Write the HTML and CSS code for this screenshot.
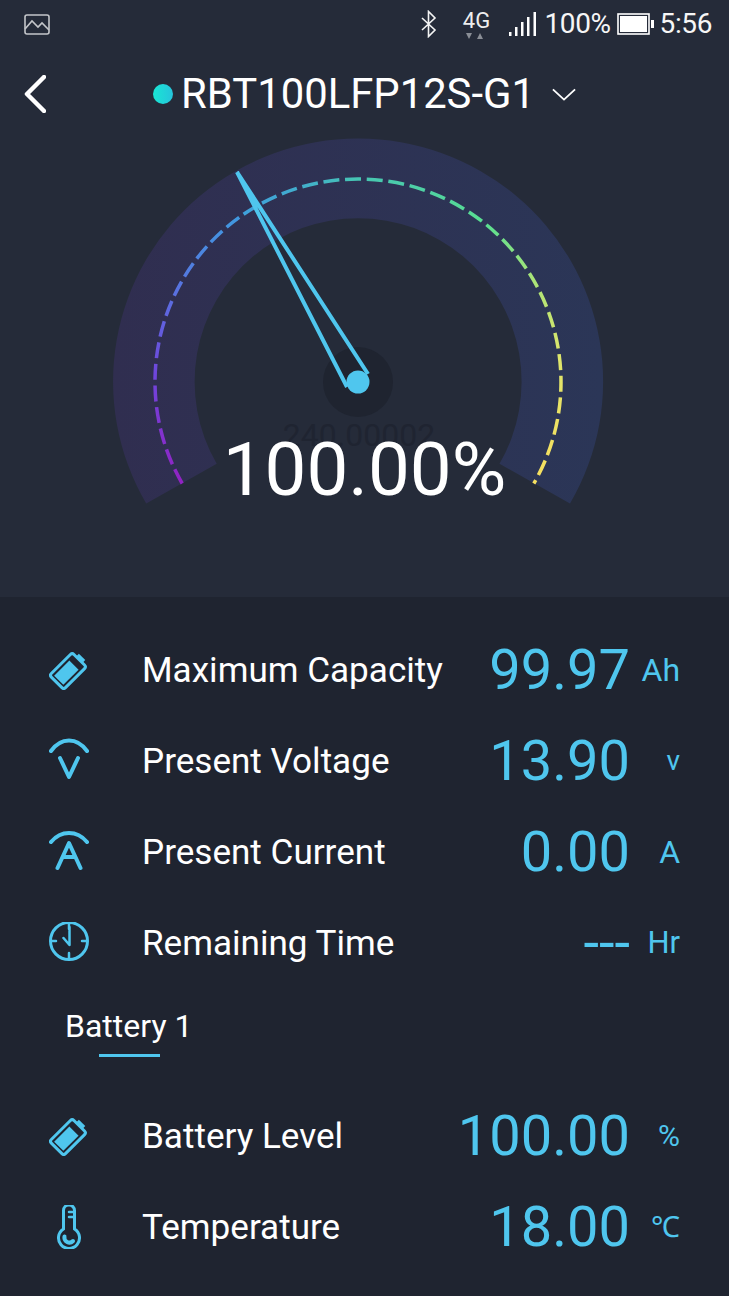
FILE: index.html
```html
<!DOCTYPE html>
<html lang="en">
<head>
<meta charset="utf-8">
<title>RBT100LFP12S-G1</title>
<link rel="stylesheet" href="styles.css">
</head>
<body>
<svg class="defs" width="0" height="0" aria-hidden="true">
  <defs>
    <symbol id="battery" viewBox="0 0 40 40">
      <g transform="rotate(45 20 20)">
        <rect class="ln" x="10" y="5.500" width="20" height="32" rx="2.500"/>
        <path class="sf" d="M15.500 1.500h9v4h-9z"/>
        <rect class="fl" x="13.500" y="13" width="13" height="21.500"/>
      </g>
    </symbol>
  </defs>
</svg>
<main class="phone">
  <section class="top">
    <div class="status">
      <svg class="st-img" width="26" height="21" viewBox="0 0 26 21"><rect x="1" y="1" width="24" height="19" rx="2"/><path d="M1 15 8 7l6 6 4-4 7 7"/></svg>
      <div class="st-right">
        <svg class="st-bt" width="22" height="28" viewBox="0 0 22 28"><path d="M4 8l13 12-6.500 6.500V1.500L17 8 4 20"/></svg>
        <div class="st-net"><span class="st-4g">4G</span><svg width="20" height="7" viewBox="0 0 20 7"><path d="M3 6 0 0h6zM11 6l3-6 3 6z"/></svg></div>
        <svg class="st-sig" width="30" height="26" viewBox="0 0 30 26"><path d="M1 21v4h2.500v-4zM7 16v9h2.500v-9zM13 11v14h2.500V11zM19 6v19h2.500V6zM25.500 1v24H28V1z"/></svg>
        <span class="st-txt st-pct">100%</span>
        <svg class="st-bat" width="37" height="22" viewBox="0 0 37 22"><rect class="bo" x="1" y="1" width="31" height="20"/><rect class="bi" x="3" y="3" width="27" height="16"/><rect class="bi" x="34" y="7" width="3" height="8"/></svg>
        <span class="st-txt">5:56</span>
      </div>
    </div>
    <header class="head">
      <svg class="back" width="22" height="38" viewBox="0 0 22 38"><path d="M20 2 3 19l17 17"/></svg>
      <div class="dev">
        <span class="dot"></span>
        <span class="name">RBT100LFP12S-G1</span>
        <svg class="caret" width="26" height="14" viewBox="0 0 26 14"><path d="M1 1.500 13 12.500 25 1.500"/></svg>
      </div>
    </header>
    <div class="gauge">
      <svg class="dial" width="729" height="400" viewBox="0 130 729 400">
        <defs>
          <linearGradient id="band" gradientUnits="userSpaceOnUse" x1="114" y1="0" x2="602" y2="0">
            <stop offset="0" stop-color="#302e50"/>
            <stop offset="1" stop-color="#2b3657"/>
          </linearGradient>
          <linearGradient id="dashL" gradientUnits="userSpaceOnUse" x1="0" y1="484" x2="0" y2="214">
            <stop offset="0" stop-color="#9222c2"/>
            <stop offset=".4" stop-color="#6f45dc"/>
            <stop offset=".7" stop-color="#5a6fe0"/>
            <stop offset="1" stop-color="#3f9be0"/>
          </linearGradient>
          <linearGradient id="dashR" gradientUnits="userSpaceOnUse" x1="243" y1="180" x2="560" y2="484">
            <stop offset=".05" stop-color="#3f9fdc"/>
            <stop offset=".19" stop-color="#46c6b2"/>
            <stop offset=".47" stop-color="#5adf90"/>
            <stop offset=".63" stop-color="#a8e478"/>
            <stop offset=".8" stop-color="#dde66c"/>
            <stop offset=".95" stop-color="#f5e060"/>
          </linearGradient>
        </defs>
        <path class="band" d="M146.200 503.500A245 243 0 1 1 570 503.500L499.500 463.800A163.500 163.500 0 1 0 216.700 463.800Z"/>
        <path class="dash dash-l" d="M182.200 483.500A203 203 0 0 1 243.600 214.300"/>
        <path class="dash dash-r" d="M243.600 214.300A203 203 0 0 1 533.800 483.500"/>
        <circle class="hub" cx="358" cy="382" r="35"/>
        <path class="needle" d="M347 387 237 172 368 374"/>
        <circle class="knob" cx="358" cy="382" r="11.500"/>
      </svg>
      <div class="ghost">240.00002</div>
      <div class="pct">100.00%</div>
    </div>
  </section>
  <section class="bottom">
    <div class="row">
      <svg class="ic" width="40" height="40"><use href="#battery"/></svg>
      <span class="label">Maximum Capacity</span><span class="val">99.97</span><span class="unit">Ah</span>
    </div>
    <div class="row">
      <svg class="ic" width="40" height="46" viewBox="0 0 40 46"><path class="ln" d="M2 13C12 -1 28 -1 38 13M11 20 20 39l9-19"/></svg>
      <span class="label">Present Voltage</span><span class="val">13.90</span><span class="unit unit-s">v</span>
    </div>
    <div class="row">
      <svg class="ic" width="40" height="46" viewBox="0 0 40 46"><path class="ln" d="M2 13C12 1 28 1 38 13M8.500 39 20 14l11.500 25M14 28h12"/></svg>
      <span class="label">Present Current</span><span class="val">0.00</span><span class="unit">A</span>
    </div>
    <div class="row">
      <svg class="ic" width="40" height="42" viewBox="0 0 40 42"><circle class="cl" cx="20" cy="19" r="18.500"/><path class="ln thin" d="M20 1v6M20 31v6M2 19h5M33 19h5M20.500 5v18l-6-7"/></svg>
      <span class="label">Remaining Time</span><span class="val">---</span><span class="unit unit-h">Hr</span>
    </div>
    <div class="tabs"><span class="tab">Battery 1</span></div>
    <div class="row">
      <svg class="ic" width="40" height="40"><use href="#battery"/></svg>
      <span class="label">Battery Level</span><span class="val">100.00</span><span class="unit unit-p">%</span>
    </div>
    <div class="row">
      <svg class="ic" width="40" height="44" viewBox="0 0 40 44"><path class="cl" d="M14.500 24V5.500a5.500 5.500 0 0 1 11 0V24a10.500 10.500 0 1 1-11 0Z"/><path class="ln thin" d="M20 7h4M20 12h4"/><path class="ln" d="M15.500 31.500a5 5 0 0 0 8.500 4.500"/></svg>
      <span class="label">Temperature</span><span class="val">18.00</span><span class="unit unit-c">℃</span>
    </div>
  </section>
</main>
</body>
</html>
```
FILE: styles.css
```css
* { box-sizing: border-box; margin: 0; padding: 0; }
html, body { width: 729px; height: 1296px; overflow: hidden; background: #1f2430; }
body { font-family: Roboto, "Liberation Sans", sans-serif; color: #fff; }
.defs { position: absolute; }
.phone { display: flex; flex-direction: column; width: 729px; height: 1296px; }

.top { height: 597px; background: #252b39; display: flex; flex-direction: column; }

.status { height: 48px; display: flex; align-items: center; justify-content: space-between; padding: 0 17px 0 24px; }
.st-right { display: flex; align-items: center; }
.st-img rect, .st-img path { fill: none; stroke: #c4c6ca; stroke-width: 1.6; }
.st-bt { margin-right: 21px; }
.st-bt path { fill: none; stroke: #f4f4f4; stroke-width: 1.6; }
.st-net { display: flex; flex-direction: column; align-items: center; width: 30px; margin-right: 17px; height: 31px; }
.st-4g { font-size: 22px; line-height: 23px; color: #eee; }
.st-net svg { fill: #8a8e96; margin-top: 1px; }
.st-sig { margin-right: 6px; fill: #fff; }
.st-txt { font-size: 28px; line-height: 30px; letter-spacing: -0.4px; color: #f6f6f6; }
.st-pct { margin-right: 6px; }
.st-bat { margin-right: 6px; }
.st-bat .bo { fill: none; stroke: #fff; stroke-width: 1.6; }
.st-bat .bi { fill: #fff; }

.head { height: 82px; padding: 10px 0 0 24px; display: flex; align-items: center; }
.back { flex: none; }
.back path { fill: none; stroke: #fff; stroke-width: 4.500; stroke-linecap: round; stroke-linejoin: round; }
.dev { display: flex; align-items: center; margin-left: 107px; }
.dot { width: 20px; height: 20px; border-radius: 50%; background: linear-gradient(90deg, #19e6d4, #26c4dc); margin-right: 8px; }
.name { font-size: 41.800px; line-height: 46px; color: #fff; }
.caret { margin-left: 17px; width: 24px; height: 13px; }
.caret path { fill: none; stroke: #fff; stroke-width: 2; }

.gauge { position: relative; height: 400px; }
.dial { display: block; }
.band { fill: url(#band); }
.dash { fill: none; stroke-width: 3.500; stroke-dasharray: 16 5.700; }
.dash-l { stroke: url(#dashL); }
.dash-r { stroke: url(#dashR); }
.hub { fill: #1f2430; }
.needle { fill: none; stroke: #4fc6ee; stroke-width: 4; stroke-linejoin: miter; }
.knob { fill: #4fc6ee; }
.ghost { position: absolute; left: 0; right: 11px; top: 287px; text-align: center; font-size: 32px; line-height: 36px; color: #1f2431; }
.pct { position: absolute; left: 0; right: 0; top: 296px; text-align: center; font-size: 74.500px; line-height: 88px; color: #fff; }

.bottom { flex: 1; background: #1f2430; padding-top: 27px; }
.row { height: 91px; display: grid; grid-template-columns: 93px 1fr auto 50px; align-items: center; padding: 0 49px; }
.ic { display: block; }
.ln { fill: none; stroke: #4fc6ee; stroke-width: 4; stroke-linecap: round; stroke-linejoin: round; }
.cl { fill: none; stroke: #4fc6ee; stroke-width: 3; }
.thin { stroke-width: 2.500; }
#battery .ln { stroke-width: 3; }
.sf { fill: #4fc6ee; }
.fl { fill: #4fc6ee; }
.label { font-size: 35.100px; line-height: 40px; color: #fff; white-space: nowrap; }
.val { font-size: 56px; line-height: 64px; color: #4fc6ee; text-align: right; }
.unit { font-size: 32px; line-height: 36px; color: #4fc6ee; text-align: right; }
.unit-s { font-size: 28px; }
.unit-h { font-size: 31px; }
.unit-p { font-size: 30px; }
.unit-c { font-size: 29px; }

.tabs { height: 102px; padding: 17px 0 0 65px; }
.tab { display: inline-block; font-size: 32px; line-height: 42px; color: #fff; position: relative; }
.tab::after { content: ""; position: absolute; left: 34px; top: 49px; width: 61px; height: 3px; background: #4fc6ee; }
```
